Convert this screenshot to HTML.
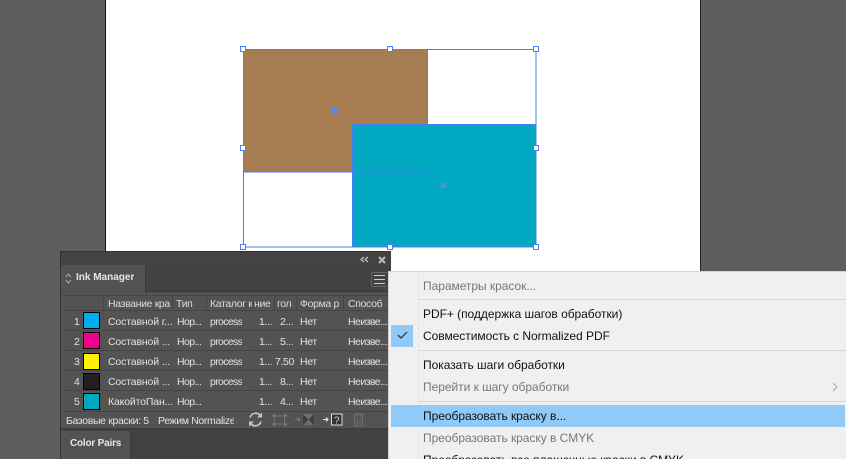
<!DOCTYPE html>
<html style="width:846px;height:459px;overflow:hidden"><head><meta charset="utf-8">
<style>
html,body{margin:0;padding:0}
body{width:846px;height:459px;overflow:hidden;position:relative;background:#5e5e5e;font-family:"Liberation Sans","DejaVu Sans",sans-serif}
div{position:absolute;box-sizing:border-box}
#root{left:0;top:0;width:846px;height:459px;overflow:hidden;background:#5e5e5e}
.t{white-space:nowrap;font-size:10.5px;letter-spacing:-.35px;line-height:14px;color:#e2e2e2;overflow:hidden}
.h{color:#dcdcdc}
.a{letter-spacing:-.15px}
.n{letter-spacing:-.6px}
.p{letter-spacing:-.65px}
.u{letter-spacing:-.55px}
.m{white-space:nowrap;font-size:12px;letter-spacing:-.04px;line-height:16px;left:423px;color:#111}
.d{color:#777}
.s{height:1px;left:418px;width:428px;background:#d6d6d6}
.sep{height:1px;left:64px;width:324px;background:#454545}
.sw{left:83px;width:17px;height:17px;border:1px solid #000}
.hc{top:295px;height:15px;width:1px;background:#454545}
.hnd{width:6px;height:6px;border:1px solid #4f7df5;background:#fff}
</style></head><body>
<div id="root">
<div style="left:105px;top:0;width:596px;height:275px;background:#fff;border-left:1px solid #111;border-right:1px solid #222"></div>

<svg width="846" height="459" style="position:absolute;left:0;top:0" shape-rendering="crispEdges">
<rect x="243" y="49" width="185" height="123" fill="#a67c52"/>
<rect x="352" y="124" width="184.500" height="123" fill="#00a9c1"/>
<g fill="none" stroke="#4f7df5" stroke-width="1">
<rect x="243.500" y="49.500" width="292.500" height="197.500"/>
<rect x="243.500" y="49.500" width="184" height="122.500"/>
<rect x="352.500" y="124.500" width="183.500" height="122.500"/>
</g>
<rect x="332" y="108" width="5" height="5" fill="#5b84f5"/>
<rect x="441" y="183" width="5" height="5" fill="#5b84f5"/>
</svg>
<div class="hnd" style="left:240px;top:46px"></div>
<div class="hnd" style="left:387px;top:46px"></div>
<div class="hnd" style="left:533px;top:46px"></div>
<div class="hnd" style="left:240px;top:145px"></div>
<div class="hnd" style="left:533px;top:145px"></div>
<div class="hnd" style="left:240px;top:244px"></div>
<div class="hnd" style="left:387px;top:244px"></div>
<div class="hnd" style="left:533px;top:244px"></div>

<!-- Panel -->
<div style="left:60px;top:251px;width:331px;height:208px;background:#535353;border-left:1px solid #333;border-top:1px solid #333"></div>
<div style="left:61px;top:252px;width:330px;height:13px;background:#434343"></div>
<div style="left:61px;top:265px;width:330px;height:27px;background:#424242;border-bottom:1px solid #393939"></div>
<div style="left:61px;top:265px;width:85px;height:28px;background:#535353;border-right:1px solid #393939"></div>
<svg width="846" height="459" style="position:absolute;left:0;top:0">
<path d="M364 257l-3 2.500 3 2.500M368 257l-3 2.500 3 2.500" fill="none" stroke="#c8c8c8" stroke-width="1.200"/>
<path d="M379 257l6 6M385 257l-6 6" fill="none" stroke="#bdbdbd" stroke-width="2"/>
<path d="M66 277l2.500-3 2.500 3M66 280l2.500 3 2.500-3" fill="none" stroke="#aaa" stroke-width="1"/>
<rect x="371.500" y="272.500" width="17" height="14" rx="2" fill="none" stroke="#666"/>
<path d="M374 275.500h11M374 279.500h11M374 283.500h11" stroke="#ccc" stroke-width="1"/>
<path d="M374 441.500h10M374 444.500h10M374 447.500h10" stroke="#bdbdbd" stroke-width="1"/>
</svg>
<div class="t" style="left:76px;top:271px;font-weight:bold;font-size:10px;letter-spacing:0;color:#e6e6e6;">Ink Manager</div>

<!-- table -->
<div style="left:63px;top:295px;width:325px;height:1px;background:#454545"></div>
<div class="sep" style="top:310px"></div>
<div class="sep" style="top:330px"></div>
<div class="sep" style="top:350px"></div>
<div class="sep" style="top:370px"></div>
<div class="sep" style="top:390px"></div>
<div class="sep" style="top:411px"></div>
<div class="hc" style="left:103px"></div>
<div class="hc" style="left:172px"></div>
<div class="hc" style="left:206px"></div>
<div class="hc" style="left:253px"></div>
<div class="hc" style="left:274px"></div>
<div class="hc" style="left:296px"></div>
<div class="hc" style="left:343px"></div>

<div class="t h" style="left:108px;top:297px;width:63px">Название кра</div>
<div class="t h" style="left:176px;top:297px;width:28px">Тип</div>
<div class="t h" style="left:210px;top:297px;width:42px">Каталог кр</div>
<div class="t h" style="left:254px;top:297px;width:19px;text-align:right;padding-right:3px">ние</div>
<div class="t h" style="left:277px;top:297px;width:18px">гол</div>
<div class="t h" style="left:300px;top:297px;width:42px">Форма р</div>
<div class="t h" style="left:348px;top:297px;width:38px">Способ</div>

<div class="t" style="left:74px;top:315px">1</div>
<div class="sw" style="top:312px;background:#00aeef"></div>
<div class="t a" style="left:108px;top:315px">Составной г...</div><div class="t n" style="left:177px;top:315px">Нор...</div><div class="t p" style="left:210px;top:315px">process</div><div class="t" style="left:259px;top:315px">1...</div><div class="t" style="left:280px;top:315px">2...</div><div class="t" style="left:300px;top:315px">Нет</div><div class="t u" style="left:348px;top:315px">Неизве...</div>

<div class="t" style="left:74px;top:335px">2</div>
<div class="sw" style="top:332px;background:#ec008c"></div>
<div class="t a" style="left:108px;top:335px">Составной ...</div><div class="t n" style="left:177px;top:335px">Нор...</div><div class="t p" style="left:210px;top:335px">process</div><div class="t" style="left:259px;top:335px">1...</div><div class="t" style="left:280px;top:335px">5...</div><div class="t" style="left:300px;top:335px">Нет</div><div class="t u" style="left:348px;top:335px">Неизве...</div>

<div class="t" style="left:74px;top:355px">3</div>
<div class="sw" style="top:353px;background:#fff200"></div>
<div class="t a" style="left:108px;top:355px">Составной ...</div><div class="t n" style="left:177px;top:355px">Нор...</div><div class="t p" style="left:210px;top:355px">process</div><div class="t" style="left:259px;top:355px">1...</div><div class="t" style="left:275px;top:355px">7.50</div><div class="t" style="left:300px;top:355px">Нет</div><div class="t u" style="left:348px;top:355px">Неизве...</div>

<div class="t" style="left:74px;top:375px">4</div>
<div class="sw" style="top:373px;background:#231f20"></div>
<div class="t a" style="left:108px;top:375px">Составной ...</div><div class="t n" style="left:177px;top:375px">Нор...</div><div class="t p" style="left:210px;top:375px">process</div><div class="t" style="left:259px;top:375px">1...</div><div class="t" style="left:280px;top:375px">8...</div><div class="t" style="left:300px;top:375px">Нет</div><div class="t u" style="left:348px;top:375px">Неизве...</div>

<div class="t" style="left:74px;top:395px">5</div>
<div class="sw" style="top:393px;background:#00a9c1"></div>
<div class="t a" style="left:108px;top:395px">КакойтоПан...</div><div class="t n" style="left:177px;top:395px">Нор...</div><div class="t" style="left:259px;top:395px">1...</div><div class="t" style="left:280px;top:395px">4...</div><div class="t" style="left:300px;top:395px">Нет</div><div class="t u" style="left:348px;top:395px">Неизве...</div>

<!-- status -->
<div class="t" style="left:66px;top:414px;width:85px">Базовые краски: 5</div>
<div class="t" style="left:158px;top:414px;width:76px">Режим Normalized</div>
<svg width="846" height="459" style="position:absolute;left:0;top:0"><g transform="translate(0,-1.500)">
<path d="M250 419a6 6 0 0 1 10-2.500l1.500 1.500M261 423a6 6 0 0 1-10 2.500l-1.500-1.500" fill="none" stroke="#c6c6c6" stroke-width="1.600"/>
<path d="M262 414v5h-5zM249 428v-5h5z" fill="#c6c6c6"/>
<rect x="274.500" y="417.500" width="10" height="8" fill="none" stroke="#747474"/>
<path d="M272.500 415.500h3v3h-3zM284 415.500h3v3h-3zM272.500 424.500h3v3h-3zM284 424.500h3v3h-3z" fill="#747474"/>
<path d="M295 421h5M298 419l2 2-2 2" fill="none" stroke="#7a7a7a"/>
<rect x="303" y="415.500" width="11" height="11" fill="#6e6e6e"/>
<path d="M303 415.500l5.500 5.500-5.500 5.500zM314 415.500l-5.500 5.500 5.500 5.500z" fill="#3f3f3f"/>
<path d="M323 421h5M326 419l2 2-2 2" fill="none" stroke="#eee"/>
<rect x="331.500" y="415.500" width="10.500" height="11" fill="#333" stroke="#ddd"/>
<text x="336.800" y="425" font-size="10" fill="#ddd" text-anchor="middle" font-family="Liberation Sans">?</text>
<path d="M353 416.500h11M356 416.500v-1.500h5v1.500M354.500 417v10.500h8V417M357 419v7M360 419v7" fill="none" stroke="#6f6f6f"/>
</g></svg>

<!-- color pairs -->
<div style="left:61px;top:428px;width:330px;height:2px;background:#3f3f3f"></div>
<div style="left:61px;top:430px;width:330px;height:29px;background:#424242"></div>
<div style="left:61px;top:431px;width:70px;height:28px;background:#535353;border-right:1px solid #393939"></div>
<div class="t" style="left:70px;top:437px;font-weight:bold;font-size:10px;letter-spacing:-.2px;color:#e6e6e6">Color Pairs</div>

<!-- menu -->
<div style="left:388px;top:271px;width:458px;height:188px;background:#f0f0f0;border-left:1px solid #d4d4d4;border-top:1px solid #d4d4d4"></div>
<div style="left:418px;top:272px;width:1px;height:187px;background:#e8e8e8"></div>
<div class="m d" style="top:278px">Параметры красок...</div>
<div class="s" style="top:299px"></div>
<div class="m" style="top:306px">PDF+ (поддержка шагов обработки)</div>
<div style="left:391px;top:325px;width:22px;height:22px;background:#91c9f7"></div>
<svg width="846" height="459" style="position:absolute;left:0;top:0">
<path d="M398 335l3 3 6-6" fill="none" stroke="#445" stroke-width="1.500"/>
<path d="M833 383l4 4-4 4" fill="none" stroke="#aaa" stroke-width="1.100"/>
</svg>
<div class="m" style="top:328px">Совместимость с Normalized PDF</div>
<div class="s" style="top:350px"></div>
<div class="m" style="top:357px">Показать шаги обработки</div>
<div class="m d" style="top:379px">Перейти к шагу обработки</div>
<div class="s" style="top:401px"></div>
<div style="left:391px;top:405px;width:454px;height:22px;background:#91c9f7"></div>
<div class="m" style="top:408px">Преобразовать краску в...</div>
<div class="m d" style="top:430px">Преобразовать краску в CMYK</div>
<div class="m" style="top:452px">Преобразовать все плашечные краски в CMYK</div>
</div>
</body></html>
